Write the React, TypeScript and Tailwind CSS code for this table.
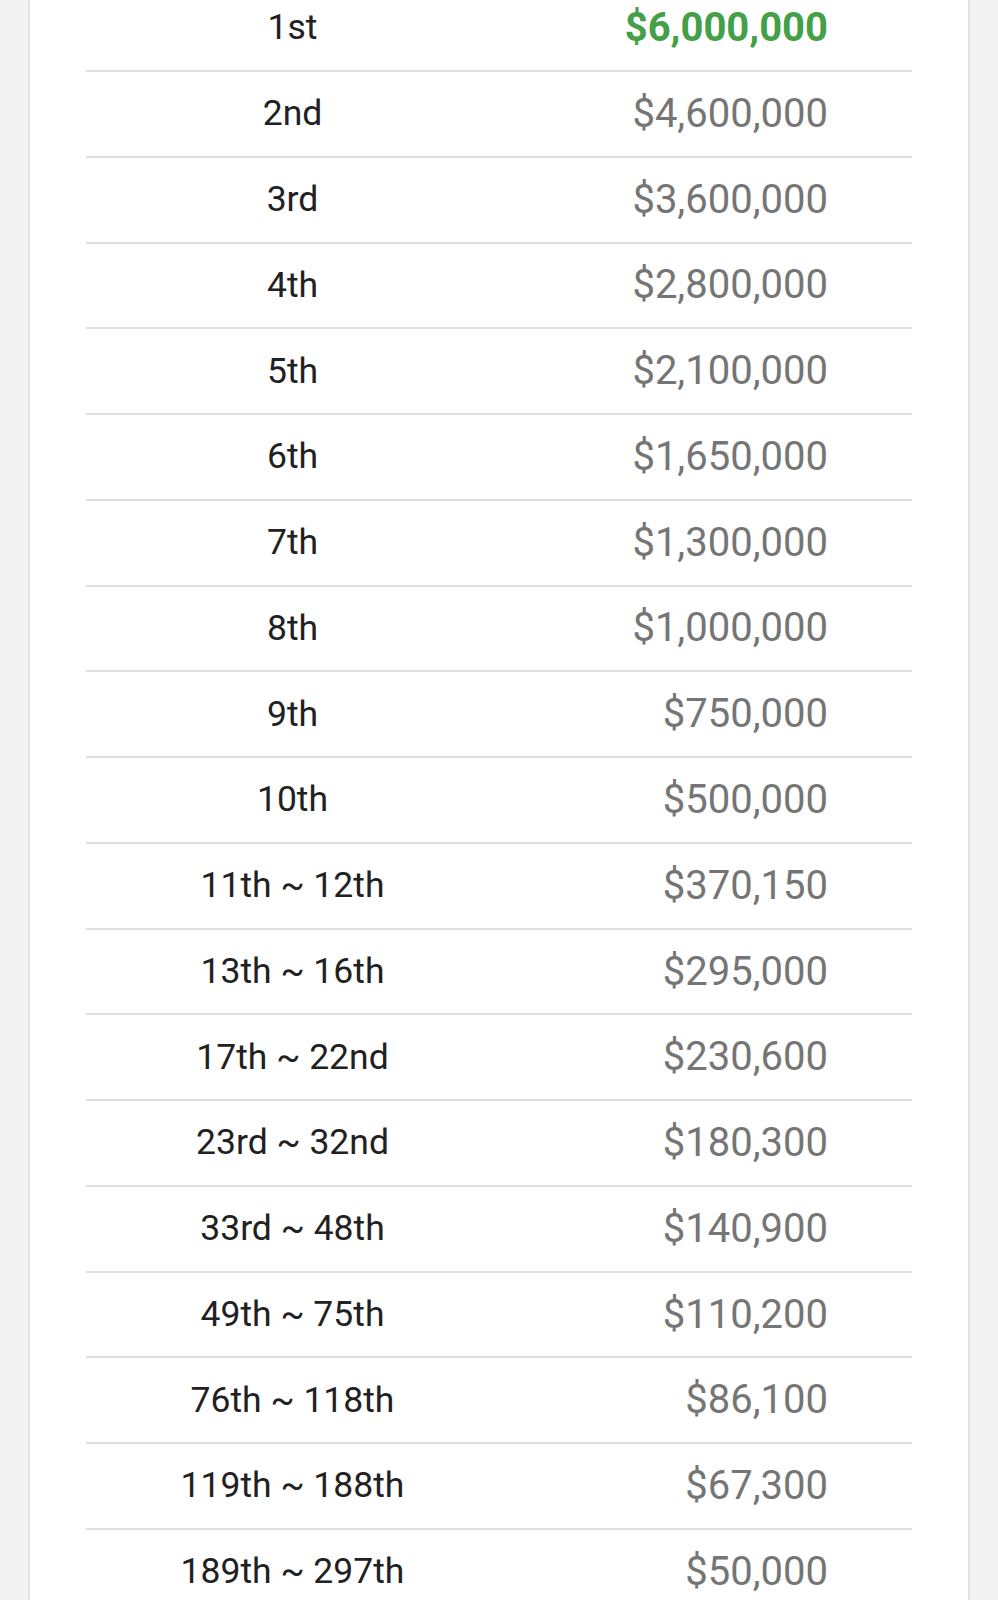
const rows: [string, string][] = [
  ["1st", "$6,000,000"],
  ["2nd", "$4,600,000"],
  ["3rd", "$3,600,000"],
  ["4th", "$2,800,000"],
  ["5th", "$2,100,000"],
  ["6th", "$1,650,000"],
  ["7th", "$1,300,000"],
  ["8th", "$1,000,000"],
  ["9th", "$750,000"],
  ["10th", "$500,000"],
  ["11th ~ 12th", "$370,150"],
  ["13th ~ 16th", "$295,000"],
  ["17th ~ 22nd", "$230,600"],
  ["23rd ~ 32nd", "$180,300"],
  ["33rd ~ 48th", "$140,900"],
  ["49th ~ 75th", "$110,200"],
  ["76th ~ 118th", "$86,100"],
  ["119th ~ 188th", "$67,300"],
  ["189th ~ 297th", "$50,000"],
]

export default function App() {
  return (
    <div className="bg-[#f3f3f3] px-[28px] font-['Roboto',sans-serif]">
      <div className="border-x-2 border-[#e3e3e3] bg-white px-[56px] pb-[40px]">
        <div className="-mt-[13.8px]">
          {rows.map(([rank, prize], i) => (
            <div
              key={rank}
              className="grid h-[85.78px] grid-cols-2 items-center border-b-2 border-[#e0e0e0]"
            >
              <div className="text-center text-[35.5px] text-[#212121]">{rank}</div>
              <div
                className={
                  i === 0
                    ? "pr-[84px] text-right text-[40px] font-bold text-[#43a047]"
                    : "pr-[84px] text-right text-[40px] text-[#757575]"
                }
              >
                {prize}
              </div>
            </div>
          ))}
        </div>
      </div>
    </div>
  )
}
